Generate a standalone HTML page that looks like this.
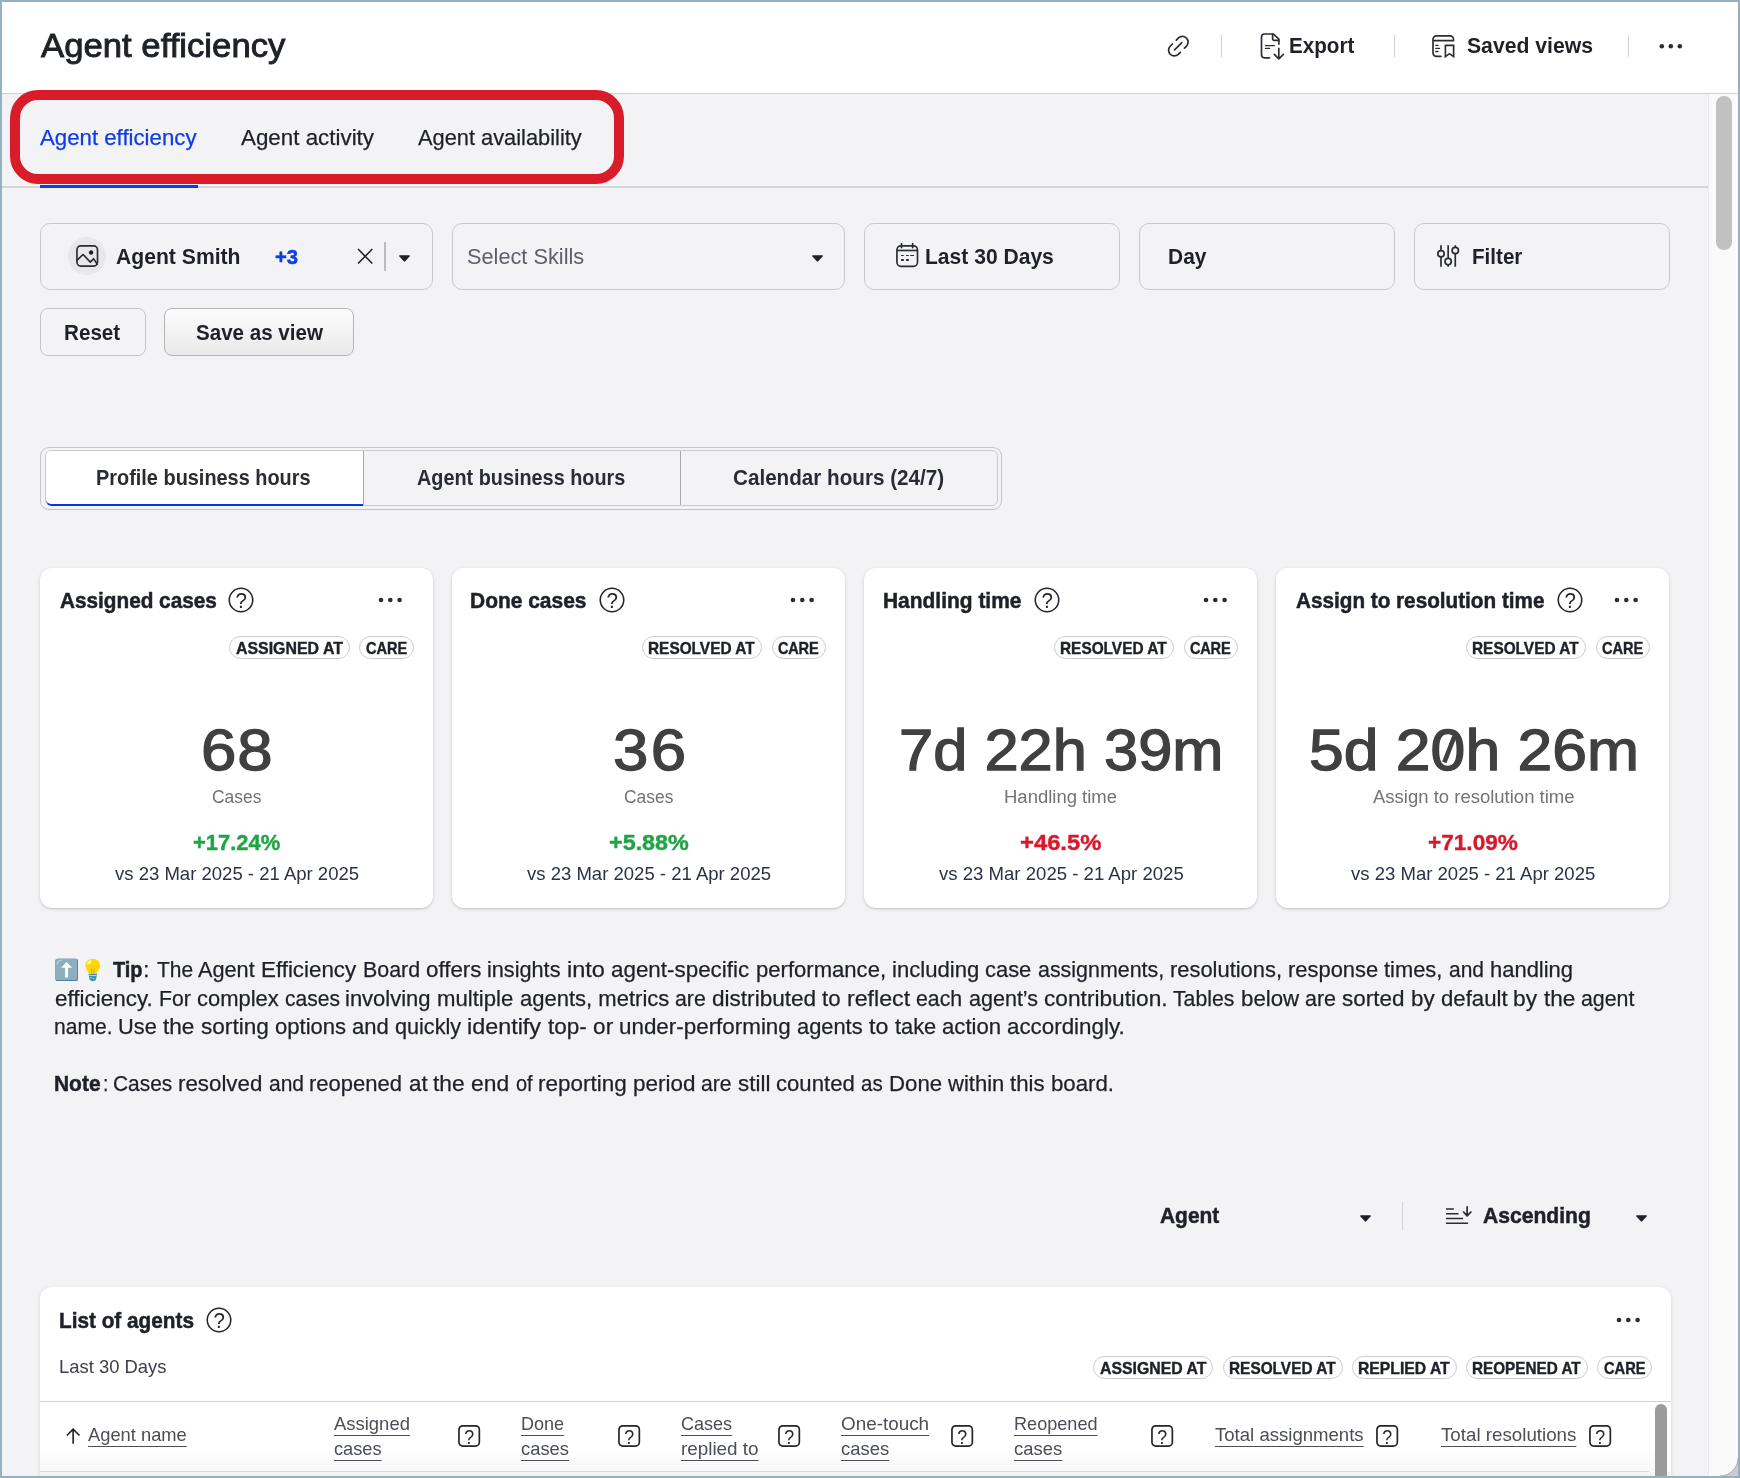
<!DOCTYPE html>
<html lang="en"><head><meta charset="utf-8"><title>Agent efficiency</title>
<style>
html,body{margin:0;padding:0}
body{width:1740px;height:1478px;position:relative;overflow:hidden;background:#f3f3f5;font-family:"Liberation Sans",sans-serif;}
.a{position:absolute;box-sizing:border-box}
.t{position:absolute;white-space:nowrap;line-height:1;transform-origin:0 0;font-family:"Liberation Sans",sans-serif}
.u{text-decoration:underline;text-decoration-thickness:1.3px;text-underline-offset:5.4px;text-decoration-skip-ink:none}
.fbox{position:absolute;box-sizing:border-box;top:223px;height:67px;border:1px solid #c9c9cd;border-radius:10px}
.card{position:absolute;box-sizing:border-box;top:568px;height:340px;width:393px;background:#fff;border-radius:12px;box-shadow:0 1px 3.5px rgba(0,0,0,.17),0 1px 1px rgba(0,0,0,.07)}
.badge{position:absolute;box-sizing:border-box;height:23px;border:1px solid #cdcdd1;border-radius:12px;background:#fefefe}
svg{position:absolute;overflow:visible}
.ic{fill:none;stroke:#2a2c34;stroke-width:2;stroke-linecap:round;stroke-linejoin:round}
</style></head><body>
<div id="root" style="position:absolute;left:0;top:0;width:1740px;height:1478px;will-change:transform">
<!-- header -->
<div class="a" style="left:0;top:0;width:1740px;height:94px;background:#fff;border-bottom:1px solid #cfcfd1"></div>
<!-- scrollbar -->
<div class="a" style="left:1708px;top:94px;width:32px;height:1384px;background:#fafafa;border-left:1.5px solid #e9e9e9"></div>
<div class="a" style="left:1716px;top:96px;width:16px;height:154px;border-radius:8px;background:#c1c1c1"></div>
<!-- tab line -->
<div class="a" style="left:0;top:186px;width:1708px;height:2px;background:#d6d6da"></div>
<div class="a" style="left:40px;top:185px;width:158px;height:3px;background:#0f3ce6"></div>
<!-- red highlight -->
<div class="a" style="left:10px;top:90px;width:614px;height:94px;border:10px solid #d91c29;border-radius:28px"></div>

<!-- header icons -->
<svg style="left:1160px;top:28px" width="40" height="36" viewBox="0 0 40 36"><g class="ic" style="stroke-width:1.7"><path d="M16.3 12.1L18.45 9.95A5.73 5.73 0 0 1 26.55 18.05L24.4 20.2"/><path d="M12.42 15.98L10.15 18.25A5.73 5.73 0 0 0 18.25 26.35L20.3 24.3"/><path d="M14.6 21.8L21.8 14.6"/></g></svg>
<div class="a" style="left:1221px;top:35px;width:1px;height:22px;background:#d2d2d6"></div>
<svg style="left:1252px;top:28px" width="40" height="36" viewBox="0 0 40 36"><g class="ic" style="stroke-width:1.65"><path d="M17.5 29.84H12.5a3 3 0 0 1-3-3V8.97a3 3 0 0 1 3-3H21.2L26.9 11.1V16.2"/><path d="M20.6 6.3V10.4a2 2 0 0 0 2 2H26.7"/><path d="M13.4 17.5H22.4M13.4 20.46H17.6" style="stroke-width:1.25"/><path d="M26.8 20.3V30.6M22.3 26.4L26.8 30.9L31.4 26.4"/></g></svg>
<div class="a" style="left:1394px;top:35px;width:1px;height:22px;background:#d2d2d6"></div>
<svg style="left:1424px;top:28px" width="40" height="36" viewBox="0 0 40 36"><g class="ic" style="stroke-width:1.65"><path d="M17 28.4H12.5a3.5 3.5 0 0 1-3.5-3.5V11.3a3.500 3.500 0 0 1 3.500-3.500H26a3.500 3.500 0 0 1 3.500 3.500V12.67H9"/><path d="M11.800 17.400H14M11.800 20.400H15.500M11.800 23.500H14" style="stroke-width:1.350"/><path d="M21.400 17.300H29.600V28.600L25.500 25.700L21.400 28.600Z" style="stroke-linejoin:miter"/></g></svg>
<div class="a" style="left:1628px;top:35px;width:1px;height:22px;background:#d2d2d6"></div>
<svg style="left:1658px;top:42px" width="26" height="8" viewBox="0 0 26 8"><g fill="#2a2c34"><circle cx="3.8" cy="4.2" r="2.3"/><circle cx="12.8" cy="4.2" r="2.3"/><circle cx="21.8" cy="4.2" r="2.3"/></g></svg>

<!-- filter boxes -->
<div class="fbox" style="left:40px;width:393px"></div>
<div class="fbox" style="left:452px;width:393px"></div>
<div class="fbox" style="left:864px;width:256px"></div>
<div class="fbox" style="left:1139px;width:256px"></div>
<div class="fbox" style="left:1414px;width:256px"></div>
<!-- agent box content -->
<div class="a" style="left:68.200px;top:236.700px;width:38px;height:38px;border-radius:19px;background:#e8e8e8"></div>
<svg style="left:64px;top:234px" width="46" height="44" viewBox="0 0 46 44"><g class="ic" style="stroke-width:1.65"><rect x="12.950" y="11.900" width="20.550" height="20.250" rx="3.800"/><path d="M13.200 26.100L19.050 20.500L26.350 28.100L29.500 24.700L33.200 30.100"/></g><circle cx="27.100" cy="18.460" r="2.200" fill="#1f2129"/></svg>
<svg style="left:350px;top:236px" width="40" height="42" viewBox="0 0 40 42"><path d="M8.050 13.070L22.330 27.560M22.330 13.070L8.050 27.560" fill="none" stroke="#1f2129" stroke-width="1.550"/></svg>
<div class="a" style="left:384px;top:242px;width:2px;height:29px;background:#bcbcbf"></div>
<svg style="left:398.9px;top:254.6px" width="11" height="7" viewBox="0 0 10.600 6.300"><path d="M0.7 0H9.9a.65.65 0 0 1 .5 1.100L6 5.900a.9.900 0 0 1-1.400 0L.2 1.100A.65.650 0 0 1 .700 0z" fill="#1f2129"/></svg>
<svg style="left:811.9px;top:254.6px" width="11" height="7" viewBox="0 0 10.600 6.300"><path d="M0.7 0H9.9a.65.65 0 0 1 .5 1.100L6 5.900a.9.900 0 0 1-1.400 0L.2 1.100A.65.650 0 0 1 .700 0z" fill="#1f2129"/></svg>
<!-- calendar icon -->
<svg style="left:888px;top:236px" width="40" height="40" viewBox="0 0 40 40"><g class="ic" style="stroke-width:1.650"><rect x="8.930" y="9.880" width="20.570" height="20.420" rx="4"/><path d="M8.930 14.480H29.500" style="stroke-linecap:butt"/><path d="M13.530 7.600V11.700M24.630 7.600V11.700"/><path d="M13.100 19.500H15.800M18.100 19.500H20.800M22.200 19.500H26" style="stroke-width:1.100;stroke-linecap:butt"/><path d="M13.100 23.950H15.800M18.100 23.950H20.800" style="stroke-width:2;stroke-linecap:butt"/></g></svg>
<!-- filter icon -->
<svg style="left:1428px;top:236px" width="40" height="40" viewBox="0 0 40 40"><g class="ic" style="stroke-width:1.700;stroke-linecap:butt"><path d="M13 9.200V30.850M20.160 9.200V30.850M27.280 9.200V30.850"/><circle cx="13" cy="17.730" r="3.150" fill="#f3f3f5"/><circle cx="20.160" cy="25.580" r="3.150" fill="#f3f3f5"/><circle cx="27.280" cy="14.480" r="3.150" fill="#f3f3f5"/></g></svg>
<!-- buttons -->
<div class="a" style="left:40px;top:308px;width:106px;height:48px;border:1px solid #c4c4c9;border-radius:8px;background:#f4f4f6"></div>
<div class="a" style="left:164px;top:308px;width:190px;height:48px;border:1px solid #b4b4b9;border-radius:8px;background:linear-gradient(#fcfcfc,#e9e9ea)"></div>

<!-- segmented -->
<div class="a" style="left:40px;top:447px;width:962px;height:63px;border:1px solid #c6c6ca;border-bottom:1.5px solid #c2c2c6;border-radius:9px;background:#f3f3f5"></div>
<div class="a" style="left:45px;top:450px;width:953px;height:56px;border:1px solid #cbcbcf;border-radius:6px"></div>
<div class="a" style="left:46px;top:451px;width:317px;height:55px;background:#fff;border-bottom:2.5px solid #0a32e6;border-radius:5px 0 0 6px"></div>
<div class="a" style="left:362.5px;top:451px;width:1px;height:54px;background:#a9a9ae"></div>
<div class="a" style="left:679.5px;top:451px;width:1px;height:54px;background:#a9a9ae"></div>

<!-- cards -->
<div class="card" style="left:40px"></div>
<div class="card" style="left:452px"></div>
<div class="card" style="left:864px"></div>
<div class="card" style="left:1276px"></div>
<svg style="left:227.30px;top:586.00px" width="28" height="28" viewBox="0 0 28 28"><circle cx="14" cy="14" r="11.75" fill="none" stroke="#24262e" stroke-width="1.55"/><text transform="translate(14.1,21.6) scale(0.9,1)" x="0" y="0" text-anchor="middle" font-family="Liberation Sans, sans-serif" font-size="22.8" fill="#24262e">?</text></svg>
<svg style="left:597.50px;top:586.00px" width="28" height="28" viewBox="0 0 28 28"><circle cx="14" cy="14" r="11.75" fill="none" stroke="#24262e" stroke-width="1.55"/><text transform="translate(14.1,21.6) scale(0.9,1)" x="0" y="0" text-anchor="middle" font-family="Liberation Sans, sans-serif" font-size="22.8" fill="#24262e">?</text></svg>
<svg style="left:1032.50px;top:586.00px" width="28" height="28" viewBox="0 0 28 28"><circle cx="14" cy="14" r="11.75" fill="none" stroke="#24262e" stroke-width="1.55"/><text transform="translate(14.1,21.6) scale(0.9,1)" x="0" y="0" text-anchor="middle" font-family="Liberation Sans, sans-serif" font-size="22.8" fill="#24262e">?</text></svg>
<svg style="left:1556.00px;top:586.00px" width="28" height="28" viewBox="0 0 28 28"><circle cx="14" cy="14" r="11.75" fill="none" stroke="#24262e" stroke-width="1.55"/><text transform="translate(14.1,21.6) scale(0.9,1)" x="0" y="0" text-anchor="middle" font-family="Liberation Sans, sans-serif" font-size="22.8" fill="#24262e">?</text></svg>
<svg style="left:376.0px;top:595.3px" width="30" height="10" viewBox="0 0 30 10"><g fill="#2a2c34"><circle cx="5.0" cy="5" r="2.3"/><circle cx="14.3" cy="5" r="2.3"/><circle cx="23.6" cy="5" r="2.3"/></g></svg>
<svg style="left:788.3px;top:595.3px" width="30" height="10" viewBox="0 0 30 10"><g fill="#2a2c34"><circle cx="5.0" cy="5" r="2.3"/><circle cx="14.3" cy="5" r="2.3"/><circle cx="23.6" cy="5" r="2.3"/></g></svg>
<svg style="left:1200.7px;top:595.3px" width="30" height="10" viewBox="0 0 30 10"><g fill="#2a2c34"><circle cx="5.0" cy="5" r="2.3"/><circle cx="14.3" cy="5" r="2.3"/><circle cx="23.6" cy="5" r="2.3"/></g></svg>
<svg style="left:1612.3px;top:595.3px" width="30" height="10" viewBox="0 0 30 10"><g fill="#2a2c34"><circle cx="5.0" cy="5" r="2.3"/><circle cx="14.3" cy="5" r="2.3"/><circle cx="23.6" cy="5" r="2.3"/></g></svg>
<div class="badge" style="left:229.0px;top:636.0px;width:120.8px"></div>
<div class="badge" style="left:359.2px;top:636.0px;width:54.6px"></div>
<div class="badge" style="left:642.0px;top:636.0px;width:119.5px"></div>
<div class="badge" style="left:771.5px;top:636.0px;width:54.0px"></div>
<div class="badge" style="left:1054.0px;top:636.0px;width:119.5px"></div>
<div class="badge" style="left:1183.5px;top:636.0px;width:54.0px"></div>
<div class="badge" style="left:1466.0px;top:636.0px;width:119.5px"></div>
<div class="badge" style="left:1595.5px;top:636.0px;width:54.5px"></div>

<!-- sort row -->
<svg style="left:1359.6px;top:1214.6px" width="11" height="7" viewBox="0 0 10.600 6.300"><path d="M0.7 0H9.9a.65.65 0 0 1 .5 1.100L6 5.900a.9.900 0 0 1-1.400 0L.2 1.100A.65.650 0 0 1 .700 0z" fill="#1f2129"/></svg>
<div class="a" style="left:1402px;top:1202px;width:1px;height:28px;background:#d2d2d6"></div>
<svg style="left:1436px;top:1196px" width="44" height="40" viewBox="0 0 44 40"><g class="ic" style="stroke-width:1.500;stroke-linecap:butt"><path d="M10 13.070H17.860M10 17.860H22.460M10 22.460H27.060M10 27.200H32.070"/><path d="M31.120 10.800V19.600M27.600 16L31.120 19.800L34.900 16" style="stroke-width:1.700;stroke-linecap:round"/></g></svg>
<svg style="left:1636.2px;top:1214.6px" width="11" height="7" viewBox="0 0 10.600 6.300"><path d="M0.7 0H9.9a.65.65 0 0 1 .5 1.100L6 5.900a.9.900 0 0 1-1.400 0L.2 1.100A.65.650 0 0 1 .700 0z" fill="#1f2129"/></svg>

<!-- table card -->
<div class="a" style="left:40px;top:1287px;width:1631px;height:220px;background:#fff;border-radius:12px;box-shadow:0 1px 4px rgba(0,0,0,.12)"></div>
<div class="a" style="left:40px;top:1401px;width:1631px;height:1px;background:#d0d0d4"></div>
<div class="a" style="left:40px;top:1448px;width:1615px;height:23px;background:linear-gradient(rgba(248,248,249,0),#f8f8f9)"></div>
<div class="a" style="left:40px;top:1471px;width:1609px;height:1px;background:#d9d9dc"></div>
<div class="a" style="left:40px;top:1472px;width:1631px;height:6px;background:#f4f4f5"></div>
<div class="a" style="left:1655px;top:1404px;width:12px;height:90px;border-radius:6px;background:#9b9b9b"></div>
<svg style="left:50px;top:1416px" width="50" height="40" viewBox="0 0 50 40"><path d="M23.130 27.730V13.300M16.800 19.540L23.130 13.100L29.450 19.540" fill="none" stroke="#1f2129" stroke-width="1.600"/></svg>
<svg style="left:205.00px;top:1306.00px" width="28" height="28" viewBox="0 0 28 28"><circle cx="14" cy="14" r="11.75" fill="none" stroke="#24262e" stroke-width="1.55"/><text transform="translate(14.1,21.6) scale(0.9,1)" x="0" y="0" text-anchor="middle" font-family="Liberation Sans, sans-serif" font-size="22.8" fill="#24262e">?</text></svg>
<svg style="left:1614.0px;top:1315.2px" width="30" height="10" viewBox="0 0 30 10"><g fill="#2a2c34"><circle cx="5.0" cy="5" r="2.3"/><circle cx="14.3" cy="5" r="2.3"/><circle cx="23.6" cy="5" r="2.3"/></g></svg>
<div class="badge" style="left:1093.2px;top:1356.2px;width:120.3px"></div>
<div class="badge" style="left:1223.3px;top:1356.2px;width:119.5px"></div>
<div class="badge" style="left:1352.2px;top:1356.2px;width:104.6px"></div>
<div class="badge" style="left:1466.2px;top:1356.2px;width:121.6px"></div>
<div class="badge" style="left:1597.2px;top:1356.2px;width:54.9px"></div>
<svg style="left:458.30px;top:1425.15px" width="22" height="22" viewBox="0 0 22 22"><rect x="0.95" y="0.85" width="20.4" height="20.2" rx="3.8" fill="none" stroke="#24262e" stroke-width="1.7"/><text transform="translate(11.15,18.7) scale(0.86,1)" x="0" y="0" text-anchor="middle" font-family="Liberation Sans, sans-serif" font-size="20.7" fill="#24262e">?</text></svg>
<svg style="left:618.10px;top:1425.15px" width="22" height="22" viewBox="0 0 22 22"><rect x="0.95" y="0.85" width="20.4" height="20.2" rx="3.8" fill="none" stroke="#24262e" stroke-width="1.7"/><text transform="translate(11.15,18.7) scale(0.86,1)" x="0" y="0" text-anchor="middle" font-family="Liberation Sans, sans-serif" font-size="20.7" fill="#24262e">?</text></svg>
<svg style="left:778.00px;top:1425.15px" width="22" height="22" viewBox="0 0 22 22"><rect x="0.95" y="0.85" width="20.4" height="20.2" rx="3.8" fill="none" stroke="#24262e" stroke-width="1.7"/><text transform="translate(11.15,18.7) scale(0.86,1)" x="0" y="0" text-anchor="middle" font-family="Liberation Sans, sans-serif" font-size="20.7" fill="#24262e">?</text></svg>
<svg style="left:951.20px;top:1425.15px" width="22" height="22" viewBox="0 0 22 22"><rect x="0.95" y="0.85" width="20.4" height="20.2" rx="3.8" fill="none" stroke="#24262e" stroke-width="1.7"/><text transform="translate(11.15,18.7) scale(0.86,1)" x="0" y="0" text-anchor="middle" font-family="Liberation Sans, sans-serif" font-size="20.7" fill="#24262e">?</text></svg>
<svg style="left:1151.40px;top:1425.15px" width="22" height="22" viewBox="0 0 22 22"><rect x="0.95" y="0.85" width="20.4" height="20.2" rx="3.8" fill="none" stroke="#24262e" stroke-width="1.7"/><text transform="translate(11.15,18.7) scale(0.86,1)" x="0" y="0" text-anchor="middle" font-family="Liberation Sans, sans-serif" font-size="20.7" fill="#24262e">?</text></svg>
<svg style="left:1376.20px;top:1425.15px" width="22" height="22" viewBox="0 0 22 22"><rect x="0.95" y="0.85" width="20.4" height="20.2" rx="3.8" fill="none" stroke="#24262e" stroke-width="1.7"/><text transform="translate(11.15,18.7) scale(0.86,1)" x="0" y="0" text-anchor="middle" font-family="Liberation Sans, sans-serif" font-size="20.7" fill="#24262e">?</text></svg>
<svg style="left:1589.30px;top:1425.15px" width="22" height="22" viewBox="0 0 22 22"><rect x="0.95" y="0.85" width="20.4" height="20.2" rx="3.8" fill="none" stroke="#24262e" stroke-width="1.7"/><text transform="translate(11.15,18.7) scale(0.86,1)" x="0" y="0" text-anchor="middle" font-family="Liberation Sans, sans-serif" font-size="20.7" fill="#24262e">?</text></svg>

<!-- slashed zero accent -->
<svg style="left:1430px;top:725px" width="40" height="50" viewBox="0 0 40 50"><path d="M14.300 37.400L24.300 11.600" stroke="#404040" stroke-width="4.600" fill="none"/></svg>
<!-- emoji icons -->
<svg style="left:48px;top:950px" width="64" height="40" viewBox="0 0 64 40">
<rect x="7.400" y="8.700" width="22.600" height="22.400" rx="2.200" fill="#3f7389"/>
<rect x="7.400" y="8.700" width="21.900" height="21.500" rx="2" fill="#8cafc0"/>
<path d="M9.300 14.200Q9.500 10.600 13.300 10.400" fill="none" stroke="#a9d1e0" stroke-width="1.200" stroke-linecap="round"/>
<path d="M18.570 11.950L24.100 17.840H20.040V27.600H17.100V17.840H13.240Z" fill="#fff"/>
<path d="M44.800 8.700c-4.200 0-7.300 3.100-7.300 6.900 0 2.300 1.100 3.800 2 5.200.700 1 1 1.900 1 3.300h8.500c0-1.400.300-2.300 1-3.300.900-1.400 2.100-2.900 2.100-5.200 0-3.800-3.100-6.900-7.300-6.900z" fill="#ffd600"/>
<ellipse cx="41.300" cy="12.300" rx="2.600" ry="1.500" transform="rotate(-40 41.300 12.300)" fill="#fff59a"/>
<path d="M43.200 18.500l.9 5M46.400 18.500l-.9 5" stroke="#e09a00" stroke-width=".9" fill="none"/>
<path d="M40.600 24.100h8.400l-.8 4.600c-.3 1.600-1.600 2.500-3.400 2.500s-3.100-.9-3.400-2.500z" fill="#3f93ab"/>
<rect x="41" y="25" width="7.600" height="1" fill="#f2d43c"/>
<path d="M42 27.600l4.500 1" stroke="#7cc4d8" stroke-width="1" fill="none"/>
</svg>

<span class="t" style="left:40.65px;top:29.30px;font-size:33px;color:#1f2129;transform:scaleX(1.0517);-webkit-text-stroke:0.9px #1f2129;">Agent efficiency</span>
<span class="t" style="left:1289.04px;top:35.80px;font-size:21.5px;color:#1f2129;transform:scaleX(0.9592);font-weight:700;">Export</span>
<span class="t" style="left:1467.10px;top:35.80px;font-size:21.5px;color:#1f2129;transform:scaleX(0.9849);font-weight:700;">Saved views</span>
<span class="t" style="left:40.12px;top:127.70px;font-size:21.5px;color:#0f3ce6;transform:scaleX(1.0337);-webkit-text-stroke:0.25px #0f3ce6;">Agent efficiency</span>
<span class="t" style="left:240.62px;top:127.70px;font-size:21.5px;color:#1f2129;transform:scaleX(1.0401);-webkit-text-stroke:0.25px #1f2129;">Agent activity</span>
<span class="t" style="left:417.93px;top:127.70px;font-size:21.5px;color:#1f2129;transform:scaleX(1.0146);-webkit-text-stroke:0.25px #1f2129;">Agent availability</span>
<span class="t" style="left:116.00px;top:247.00px;font-size:21.5px;color:#1f2129;transform:scaleX(0.9835);font-weight:700;">Agent Smith</span>
<span class="t" style="left:275.05px;top:247.00px;font-size:20.5px;color:#0f3ce6;transform:scaleX(0.9882);font-weight:700;-webkit-text-stroke:0.5px #0f3ce6;">+3</span>
<span class="t" style="left:467.00px;top:247.00px;font-size:21.5px;color:#5c5f69;transform:scaleX(1.0109);">Select Skills</span>
<span class="t" style="left:925.42px;top:247.00px;font-size:21.5px;color:#1f2129;transform:scaleX(0.9800);font-weight:700;">Last 30 Days</span>
<span class="t" style="left:1168.03px;top:247.00px;font-size:21.5px;color:#1f2129;transform:scaleX(0.9744);font-weight:700;">Day</span>
<span class="t" style="left:1471.64px;top:247.00px;font-size:21.5px;color:#1f2129;transform:scaleX(0.9579);font-weight:700;">Filter</span>
<span class="t" style="left:63.94px;top:323.00px;font-size:21.5px;color:#1f2129;transform:scaleX(0.9600);font-weight:700;">Reset</span>
<span class="t" style="left:195.60px;top:323.00px;font-size:21.5px;color:#1f2129;transform:scaleX(0.9567);font-weight:700;">Save as view</span>
<span class="t" style="left:96.07px;top:467.90px;font-size:21.5px;color:#2a2c35;transform:scaleX(0.9258);font-weight:700;">Profile business hours</span>
<span class="t" style="left:417.20px;top:467.90px;font-size:21.5px;color:#2a2c35;transform:scaleX(0.9224);font-weight:700;">Agent business hours</span>
<span class="t" style="left:733.00px;top:467.90px;font-size:21.5px;color:#2a2c35;transform:scaleX(0.9605);font-weight:700;">Calendar hours (24/7)</span>
<span class="t" style="left:60.05px;top:591.10px;font-size:21.5px;color:#1f2129;transform:scaleX(0.9645);font-weight:700;-webkit-text-stroke:0.5px #1f2129;">Assigned cases</span>
<span class="t" style="left:470.28px;top:591.10px;font-size:21.5px;color:#1f2129;transform:scaleX(0.9743);font-weight:700;-webkit-text-stroke:0.5px #1f2129;">Done cases</span>
<span class="t" style="left:882.78px;top:591.10px;font-size:21.5px;color:#1f2129;transform:scaleX(0.9739);font-weight:700;-webkit-text-stroke:0.5px #1f2129;">Handling time</span>
<span class="t" style="left:1295.75px;top:591.10px;font-size:21.5px;color:#1f2129;transform:scaleX(0.9629);font-weight:700;-webkit-text-stroke:0.5px #1f2129;">Assign to resolution time</span>
<span class="t" style="left:235.60px;top:639.60px;font-size:16.2px;color:#1f2129;transform:scaleX(0.9823);font-weight:700;-webkit-text-stroke:0.4px #1f2129;">ASSIGNED AT</span>
<span class="t" style="left:365.80px;top:639.60px;font-size:16.2px;color:#1f2129;transform:scaleX(0.9000);letter-spacing:-0.023px;font-weight:700;-webkit-text-stroke:0.4px #1f2129;">CARE</span>
<span class="t" style="left:647.65px;top:639.60px;font-size:16.2px;color:#1f2129;transform:scaleX(0.9506);font-weight:700;-webkit-text-stroke:0.4px #1f2129;">RESOLVED AT</span>
<span class="t" style="left:778.10px;top:639.60px;font-size:16.2px;color:#1f2129;transform:scaleX(0.9000);letter-spacing:-0.246px;font-weight:700;-webkit-text-stroke:0.4px #1f2129;">CARE</span>
<span class="t" style="left:1059.65px;top:639.60px;font-size:16.2px;color:#1f2129;transform:scaleX(0.9506);font-weight:700;-webkit-text-stroke:0.4px #1f2129;">RESOLVED AT</span>
<span class="t" style="left:1190.10px;top:639.60px;font-size:16.2px;color:#1f2129;transform:scaleX(0.9000);letter-spacing:-0.246px;font-weight:700;-webkit-text-stroke:0.4px #1f2129;">CARE</span>
<span class="t" style="left:1471.65px;top:639.60px;font-size:16.2px;color:#1f2129;transform:scaleX(0.9506);font-weight:700;-webkit-text-stroke:0.4px #1f2129;">RESOLVED AT</span>
<span class="t" style="left:1602.10px;top:639.60px;font-size:16.2px;color:#1f2129;transform:scaleX(0.9000);letter-spacing:-0.060px;font-weight:700;-webkit-text-stroke:0.4px #1f2129;">CARE</span>
<span class="t" style="left:200.50px;top:722.00px;font-size:57.8px;color:#404040;transform:scaleX(1.1000);letter-spacing:0.765px;-webkit-text-stroke:1.3px #404040;">68</span>
<span class="t" style="left:612.80px;top:722.00px;font-size:57.8px;color:#404040;transform:scaleX(1.1000);letter-spacing:2.129px;-webkit-text-stroke:1.3px #404040;">36</span>
<span class="t" style="left:898.87px;top:722.00px;font-size:57.8px;color:#404040;transform:scaleX(1.0629);-webkit-text-stroke:1.3px #404040;">7d 22h 39m</span>
<span class="t" style="left:1309.34px;top:722.00px;font-size:57.8px;color:#404040;transform:scaleX(1.0812);-webkit-text-stroke:1.3px #404040;">5d 20h 26m</span>
<span class="t" style="left:212.00px;top:788.20px;font-size:18px;color:#737373;transform:scaleX(0.9682);">Cases</span>
<span class="t" style="left:624.00px;top:788.20px;font-size:18px;color:#737373;transform:scaleX(0.9682);">Cases</span>
<span class="t" style="left:1003.97px;top:788.20px;font-size:18px;color:#737373;transform:scaleX(1.0271);">Handling time</span>
<span class="t" style="left:1372.50px;top:788.20px;font-size:18px;color:#737373;transform:scaleX(1.0276);">Assign to resolution time</span>
<span class="t" style="left:193.20px;top:831.40px;font-size:22.8px;color:#1fa446;transform:scaleX(0.9617);font-weight:700;-webkit-text-stroke:0.4px #1fa446;">+17.24%</span>
<span class="t" style="left:608.70px;top:831.40px;font-size:22.8px;color:#1fa446;transform:scaleX(1.0247);font-weight:700;-webkit-text-stroke:0.4px #1fa446;">+5.88%</span>
<span class="t" style="left:1020.20px;top:831.40px;font-size:22.8px;color:#d9182b;transform:scaleX(1.0440);font-weight:700;-webkit-text-stroke:0.4px #d9182b;">+46.5%</span>
<span class="t" style="left:1427.70px;top:831.40px;font-size:22.8px;color:#d9182b;transform:scaleX(0.9916);font-weight:700;-webkit-text-stroke:0.4px #d9182b;">+71.09%</span>
<span class="t" style="left:114.70px;top:865.30px;font-size:18.5px;color:#2b3245;transform:scaleX(1.0014);">vs 23 Mar 2025 - 21 Apr 2025</span>
<span class="t" style="left:526.70px;top:865.30px;font-size:18.5px;color:#2b3245;transform:scaleX(1.0014);">vs 23 Mar 2025 - 21 Apr 2025</span>
<span class="t" style="left:938.50px;top:865.30px;font-size:18.5px;color:#2b3245;transform:scaleX(1.0042);">vs 23 Mar 2025 - 21 Apr 2025</span>
<span class="t" style="left:1351.00px;top:865.30px;font-size:18.5px;color:#2b3245;transform:scaleX(1.0022);">vs 23 Mar 2025 - 21 Apr 2025</span>
<span class="t" style="left:112.65px;top:960.00px;font-size:21.5px;color:#1f2129;transform:scaleX(0.9269);font-weight:700;-webkit-text-stroke:0.5px #1f2129;">Tip</span>
<span class="t" style="left:142.80px;top:960.00px;font-size:21.5px;color:#1f2129;transform:scaleX(1.1000);letter-spacing:0.208px;-webkit-text-stroke:0.25px #1f2129;">:</span>
<span class="t" style="left:156.50px;top:960.00px;font-size:21.5px;color:#1f2129;transform:scaleX(0.9739);-webkit-text-stroke:0.25px #1f2129;">The</span>
<span class="t" style="left:198.40px;top:960.00px;font-size:21.5px;color:#1f2129;transform:scaleX(1.0087);-webkit-text-stroke:0.25px #1f2129;">Agent</span>
<span class="t" style="left:261.06px;top:960.00px;font-size:21.5px;color:#1f2129;transform:scaleX(1.0390);-webkit-text-stroke:0.25px #1f2129;">Efficiency</span>
<span class="t" style="left:362.50px;top:960.00px;font-size:21.5px;color:#1f2129;transform:scaleX(0.9961);-webkit-text-stroke:0.25px #1f2129;">Board</span>
<span class="t" style="left:425.60px;top:960.00px;font-size:21.5px;color:#1f2129;transform:scaleX(1.0395);-webkit-text-stroke:0.25px #1f2129;">offers</span>
<span class="t" style="left:487.29px;top:960.00px;font-size:21.5px;color:#1f2129;transform:scaleX(1.0080);-webkit-text-stroke:0.25px #1f2129;">insights</span>
<span class="t" style="left:566.70px;top:960.00px;font-size:21.5px;color:#1f2129;transform:scaleX(1.0950);-webkit-text-stroke:0.25px #1f2129;">into</span>
<span class="t" style="left:611.30px;top:960.00px;font-size:21.5px;color:#1f2129;transform:scaleX(1.0416);-webkit-text-stroke:0.25px #1f2129;">agent-specific</span>
<span class="t" style="left:755.67px;top:960.00px;font-size:21.5px;color:#1f2129;transform:scaleX(1.0268);-webkit-text-stroke:0.25px #1f2129;">performance,</span>
<span class="t" style="left:891.87px;top:960.00px;font-size:21.5px;color:#1f2129;transform:scaleX(1.0282);-webkit-text-stroke:0.25px #1f2129;">including</span>
<span class="t" style="left:985.30px;top:960.00px;font-size:21.5px;color:#1f2129;transform:scaleX(1.0197);-webkit-text-stroke:0.25px #1f2129;">case</span>
<span class="t" style="left:1037.70px;top:960.00px;font-size:21.5px;color:#1f2129;transform:scaleX(0.9959);-webkit-text-stroke:0.25px #1f2129;">assignments,</span>
<span class="t" style="left:1169.78px;top:960.00px;font-size:21.5px;color:#1f2129;transform:scaleX(1.0188);-webkit-text-stroke:0.25px #1f2129;">resolutions,</span>
<span class="t" style="left:1287.88px;top:960.00px;font-size:21.5px;color:#1f2129;transform:scaleX(1.0199);-webkit-text-stroke:0.25px #1f2129;">response</span>
<span class="t" style="left:1384.20px;top:960.00px;font-size:21.5px;color:#1f2129;transform:scaleX(1.0172);-webkit-text-stroke:0.25px #1f2129;">times,</span>
<span class="t" style="left:1448.60px;top:960.00px;font-size:21.5px;color:#1f2129;transform:scaleX(0.9750);-webkit-text-stroke:0.25px #1f2129;">and</span>
<span class="t" style="left:1489.50px;top:960.00px;font-size:21.5px;color:#1f2129;transform:scaleX(1.0216);-webkit-text-stroke:0.25px #1f2129;">handling</span>
<span class="t" style="left:55.10px;top:989.00px;font-size:21.5px;color:#1f2129;transform:scaleX(1.0433);-webkit-text-stroke:0.25px #1f2129;">efficiency.</span>
<span class="t" style="left:159.01px;top:989.00px;font-size:21.5px;color:#1f2129;transform:scaleX(0.9863);-webkit-text-stroke:0.25px #1f2129;">For</span>
<span class="t" style="left:196.70px;top:989.00px;font-size:21.5px;color:#1f2129;transform:scaleX(1.0217);-webkit-text-stroke:0.25px #1f2129;">complex</span>
<span class="t" style="left:284.60px;top:989.00px;font-size:21.5px;color:#1f2129;transform:scaleX(0.9785);-webkit-text-stroke:0.25px #1f2129;">cases</span>
<span class="t" style="left:345.38px;top:989.00px;font-size:21.5px;color:#1f2129;transform:scaleX(1.0231);-webkit-text-stroke:0.25px #1f2129;">involving</span>
<span class="t" style="left:437.07px;top:989.00px;font-size:21.5px;color:#1f2129;transform:scaleX(1.0305);-webkit-text-stroke:0.25px #1f2129;">multiple</span>
<span class="t" style="left:519.60px;top:989.00px;font-size:21.5px;color:#1f2129;transform:scaleX(1.0241);-webkit-text-stroke:0.25px #1f2129;">agents, metrics</span>
<span class="t" style="left:675.00px;top:989.00px;font-size:21.5px;color:#1f2129;transform:scaleX(0.9906);-webkit-text-stroke:0.25px #1f2129;">are</span>
<span class="t" style="left:711.70px;top:989.00px;font-size:21.5px;color:#1f2129;transform:scaleX(1.0497);-webkit-text-stroke:0.25px #1f2129;">distributed</span>
<span class="t" style="left:822.10px;top:989.00px;font-size:21.5px;color:#1f2129;transform:scaleX(1.0333);-webkit-text-stroke:0.25px #1f2129;">to</span>
<span class="t" style="left:846.72px;top:989.00px;font-size:21.5px;color:#1f2129;transform:scaleX(1.0787);-webkit-text-stroke:0.25px #1f2129;">reflect</span>
<span class="t" style="left:916.40px;top:989.00px;font-size:21.5px;color:#1f2129;transform:scaleX(0.9906);-webkit-text-stroke:0.25px #1f2129;">each</span>
<span class="t" style="left:968.50px;top:989.00px;font-size:21.5px;color:#1f2129;transform:scaleX(1.0011);-webkit-text-stroke:0.25px #1f2129;">agent’s</span>
<span class="t" style="left:1043.50px;top:989.00px;font-size:21.5px;color:#1f2129;transform:scaleX(1.0552);-webkit-text-stroke:0.25px #1f2129;">contribution.</span>
<span class="t" style="left:1173.40px;top:989.00px;font-size:21.5px;color:#1f2129;transform:scaleX(0.9865);-webkit-text-stroke:0.25px #1f2129;">Tables</span>
<span class="t" style="left:1240.56px;top:989.00px;font-size:21.5px;color:#1f2129;transform:scaleX(1.0362);-webkit-text-stroke:0.25px #1f2129;">below</span>
<span class="t" style="left:1305.00px;top:989.00px;font-size:21.5px;color:#1f2129;transform:scaleX(0.9987);-webkit-text-stroke:0.25px #1f2129;">are</span>
<span class="t" style="left:1342.00px;top:989.00px;font-size:21.5px;color:#1f2129;transform:scaleX(1.0437);-webkit-text-stroke:0.25px #1f2129;">sorted</span>
<span class="t" style="left:1410.56px;top:989.00px;font-size:21.5px;color:#1f2129;transform:scaleX(1.0425);-webkit-text-stroke:0.25px #1f2129;">by</span>
<span class="t" style="left:1440.50px;top:989.00px;font-size:21.5px;color:#1f2129;transform:scaleX(1.0308);-webkit-text-stroke:0.25px #1f2129;">default</span>
<span class="t" style="left:1513.14px;top:989.00px;font-size:21.5px;color:#1f2129;transform:scaleX(1.0565);-webkit-text-stroke:0.25px #1f2129;">by</span>
<span class="t" style="left:1543.50px;top:989.00px;font-size:21.5px;color:#1f2129;transform:scaleX(1.0513);-webkit-text-stroke:0.25px #1f2129;">the</span>
<span class="t" style="left:1581.33px;top:989.00px;font-size:21.5px;color:#1f2129;transform:scaleX(0.9930);-webkit-text-stroke:0.25px #1f2129;">agent</span>
<span class="t" style="left:54.12px;top:1017.30px;font-size:21.5px;color:#1f2129;transform:scaleX(0.9798);-webkit-text-stroke:0.25px #1f2129;">name.</span>
<span class="t" style="left:118.49px;top:1017.30px;font-size:21.5px;color:#1f2129;transform:scaleX(1.0134);-webkit-text-stroke:0.25px #1f2129;">Use</span>
<span class="t" style="left:163.30px;top:1017.30px;font-size:21.5px;color:#1f2129;transform:scaleX(1.0485);-webkit-text-stroke:0.25px #1f2129;">the</span>
<span class="t" style="left:200.90px;top:1017.30px;font-size:21.5px;color:#1f2129;transform:scaleX(1.0510);-webkit-text-stroke:0.25px #1f2129;">sorting</span>
<span class="t" style="left:275.00px;top:1017.30px;font-size:21.5px;color:#1f2129;transform:scaleX(1.0252);-webkit-text-stroke:0.25px #1f2129;">options</span>
<span class="t" style="left:352.20px;top:1017.30px;font-size:21.5px;color:#1f2129;transform:scaleX(1.0228);-webkit-text-stroke:0.25px #1f2129;">and</span>
<span class="t" style="left:395.00px;top:1017.30px;font-size:21.5px;color:#1f2129;transform:scaleX(1.0057);-webkit-text-stroke:0.25px #1f2129;">quickly</span>
<span class="t" style="left:467.01px;top:1017.30px;font-size:21.5px;color:#1f2129;transform:scaleX(1.0864);-webkit-text-stroke:0.25px #1f2129;">identify</span>
<span class="t" style="left:547.60px;top:1017.30px;font-size:21.5px;color:#1f2129;transform:scaleX(1.0483);-webkit-text-stroke:0.25px #1f2129;">top- or</span>
<span class="t" style="left:618.96px;top:1017.30px;font-size:21.5px;color:#1f2129;transform:scaleX(1.0416);-webkit-text-stroke:0.25px #1f2129;">under-performing</span>
<span class="t" style="left:797.00px;top:1017.30px;font-size:21.5px;color:#1f2129;transform:scaleX(1.0166);-webkit-text-stroke:0.25px #1f2129;">agents</span>
<span class="t" style="left:868.70px;top:1017.30px;font-size:21.5px;color:#1f2129;transform:scaleX(1.0793);-webkit-text-stroke:0.25px #1f2129;">to</span>
<span class="t" style="left:894.50px;top:1017.30px;font-size:21.5px;color:#1f2129;transform:scaleX(1.0148);-webkit-text-stroke:0.25px #1f2129;">take</span>
<span class="t" style="left:941.80px;top:1017.30px;font-size:21.5px;color:#1f2129;transform:scaleX(1.0309);-webkit-text-stroke:0.25px #1f2129;">action</span>
<span class="t" style="left:1007.23px;top:1017.30px;font-size:21.5px;color:#1f2129;transform:scaleX(1.0401);-webkit-text-stroke:0.25px #1f2129;">accordingly.</span>
<span class="t" style="left:54.38px;top:1073.60px;font-size:21.5px;color:#1f2129;transform:scaleX(0.9740);font-weight:700;-webkit-text-stroke:0.5px #1f2129;">Note</span>
<span class="t" style="left:102.80px;top:1073.60px;font-size:21.5px;color:#1f2129;transform:scaleX(0.9000);letter-spacing:-0.251px;-webkit-text-stroke:0.25px #1f2129;">:</span>
<span class="t" style="left:113.03px;top:1073.60px;font-size:21.5px;color:#1f2129;transform:scaleX(0.9714);-webkit-text-stroke:0.25px #1f2129;">Cases</span>
<span class="t" style="left:177.96px;top:1073.60px;font-size:21.5px;color:#1f2129;transform:scaleX(1.0374);-webkit-text-stroke:0.25px #1f2129;">resolved</span>
<span class="t" style="left:268.50px;top:1073.60px;font-size:21.5px;color:#1f2129;transform:scaleX(0.9774);-webkit-text-stroke:0.25px #1f2129;">and</span>
<span class="t" style="left:309.38px;top:1073.60px;font-size:21.5px;color:#1f2129;transform:scaleX(1.0234);-webkit-text-stroke:0.25px #1f2129;">reopened</span>
<span class="t" style="left:408.50px;top:1073.60px;font-size:21.5px;color:#1f2129;transform:scaleX(1.0375);-webkit-text-stroke:0.25px #1f2129;">at</span>
<span class="t" style="left:433.30px;top:1073.60px;font-size:21.5px;color:#1f2129;transform:scaleX(1.0596);-webkit-text-stroke:0.25px #1f2129;">the</span>
<span class="t" style="left:471.30px;top:1073.60px;font-size:21.5px;color:#1f2129;transform:scaleX(1.0611);-webkit-text-stroke:0.25px #1f2129;">end</span>
<span class="t" style="left:515.70px;top:1073.60px;font-size:21.5px;color:#1f2129;transform:scaleX(0.9287);-webkit-text-stroke:0.25px #1f2129;">of</span>
<span class="t" style="left:537.86px;top:1073.60px;font-size:21.5px;color:#1f2129;transform:scaleX(1.0448);-webkit-text-stroke:0.25px #1f2129;">reporting</span>
<span class="t" style="left:632.76px;top:1073.60px;font-size:21.5px;color:#1f2129;transform:scaleX(1.0435);-webkit-text-stroke:0.25px #1f2129;">period</span>
<span class="t" style="left:701.40px;top:1073.60px;font-size:21.5px;color:#1f2129;transform:scaleX(0.9825);-webkit-text-stroke:0.25px #1f2129;">are</span>
<span class="t" style="left:737.80px;top:1073.60px;font-size:21.5px;color:#1f2129;transform:scaleX(1.0425);-webkit-text-stroke:0.25px #1f2129;">still</span>
<span class="t" style="left:776.40px;top:1073.60px;font-size:21.5px;color:#1f2129;transform:scaleX(1.0293);-webkit-text-stroke:0.25px #1f2129;">counted</span>
<span class="t" style="left:861.30px;top:1073.60px;font-size:21.5px;color:#1f2129;transform:scaleX(0.9553);-webkit-text-stroke:0.25px #1f2129;">as</span>
<span class="t" style="left:888.67px;top:1073.60px;font-size:21.5px;color:#1f2129;transform:scaleX(1.0336);-webkit-text-stroke:0.25px #1f2129;">Done</span>
<span class="t" style="left:948.02px;top:1073.60px;font-size:21.5px;color:#1f2129;transform:scaleX(1.0239);-webkit-text-stroke:0.25px #1f2129;">within</span>
<span class="t" style="left:1010.40px;top:1073.60px;font-size:21.5px;color:#1f2129;transform:scaleX(1.0347);-webkit-text-stroke:0.25px #1f2129;">this</span>
<span class="t" style="left:1051.29px;top:1073.60px;font-size:21.5px;color:#1f2129;transform:scaleX(1.0332);-webkit-text-stroke:0.25px #1f2129;">board.</span>
<span class="t" style="left:1159.85px;top:1205.80px;font-size:21.5px;color:#1f2129;transform:scaleX(0.9728);font-weight:700;-webkit-text-stroke:0.5px #1f2129;">Agent</span>
<span class="t" style="left:1483.25px;top:1205.80px;font-size:21.5px;color:#1f2129;transform:scaleX(0.9810);font-weight:700;-webkit-text-stroke:0.5px #1f2129;">Ascending</span>
<span class="t" style="left:58.88px;top:1310.60px;font-size:21.5px;color:#1f2129;transform:scaleX(0.9654);font-weight:700;-webkit-text-stroke:0.5px #1f2129;">List of agents</span>
<span class="t" style="left:58.60px;top:1358.30px;font-size:18.5px;color:#3d404a;transform:scaleX(0.9951);">Last 30 Days</span>
<span class="t" style="left:1099.80px;top:1359.60px;font-size:16.2px;color:#1f2129;transform:scaleX(0.9778);font-weight:700;-webkit-text-stroke:0.4px #1f2129;">ASSIGNED AT</span>
<span class="t" style="left:1228.95px;top:1359.60px;font-size:16.2px;color:#1f2129;transform:scaleX(0.9506);font-weight:700;-webkit-text-stroke:0.4px #1f2129;">RESOLVED AT</span>
<span class="t" style="left:1357.83px;top:1359.60px;font-size:16.2px;color:#1f2129;transform:scaleX(0.9709);font-weight:700;-webkit-text-stroke:0.4px #1f2129;">REPLIED AT</span>
<span class="t" style="left:1471.86px;top:1359.60px;font-size:16.2px;color:#1f2129;transform:scaleX(0.9440);font-weight:700;-webkit-text-stroke:0.4px #1f2129;">REOPENED AT</span>
<span class="t" style="left:1603.80px;top:1359.60px;font-size:16.2px;color:#1f2129;transform:scaleX(0.9051);font-weight:700;-webkit-text-stroke:0.4px #1f2129;">CARE</span>
<span class="t u" style="left:87.70px;top:1425.80px;font-size:18.5px;color:#4b4e58;transform:scaleX(0.9904);">Agent name</span>
<span class="t u" style="left:334.30px;top:1414.70px;font-size:18.5px;color:#4b4e58;transform:scaleX(0.9973);">Assigned</span>
<span class="t u" style="left:334.30px;top:1439.80px;font-size:18.5px;color:#4b4e58;transform:scaleX(0.9849);">cases</span>
<span class="t u" style="left:521.00px;top:1414.70px;font-size:18.5px;color:#4b4e58;transform:scaleX(0.9745);">Done</span>
<span class="t u" style="left:521.00px;top:1439.80px;font-size:18.5px;color:#4b4e58;transform:scaleX(0.9932);">cases</span>
<span class="t u" style="left:681.00px;top:1414.70px;font-size:18.5px;color:#4b4e58;transform:scaleX(0.9745);">Cases</span>
<span class="t u" style="left:681.00px;top:1439.80px;font-size:18.5px;color:#4b4e58;transform:scaleX(1.0183);">replied to</span>
<span class="t u" style="left:841.00px;top:1414.70px;font-size:18.5px;color:#4b4e58;transform:scaleX(1.0199);">One-touch</span>
<span class="t u" style="left:841.00px;top:1439.80px;font-size:18.5px;color:#4b4e58;transform:scaleX(0.9974);">cases</span>
<span class="t u" style="left:1014.30px;top:1414.70px;font-size:18.5px;color:#4b4e58;transform:scaleX(0.9780);">Reopened</span>
<span class="t u" style="left:1014.30px;top:1439.80px;font-size:18.5px;color:#4b4e58;transform:scaleX(0.9974);">cases</span>
<span class="t u" style="left:1214.60px;top:1425.80px;font-size:18.5px;color:#4b4e58;transform:scaleX(1.0036);">Total assignments</span>
<span class="t u" style="left:1441.30px;top:1425.80px;font-size:18.5px;color:#4b4e58;transform:scaleX(1.0128);">Total resolutions</span>

<!-- window frame -->
<svg style="left:1700px;top:1438px" width="40" height="40" viewBox="0 0 40 40"><path d="M38 20v18H20A18 18 0 0 0 38 20z" fill="#cdcdcd"/><path d="M38 20A18 18 0 0 1 20 38" fill="none" stroke="#9a9a9a" stroke-width="0.8"/></svg>
<div class="a" style="left:0;top:0;width:1740px;height:1478px;border:2px solid #93b1c1;border-bottom-width:2px;pointer-events:none"></div>
</div>
</body></html>
